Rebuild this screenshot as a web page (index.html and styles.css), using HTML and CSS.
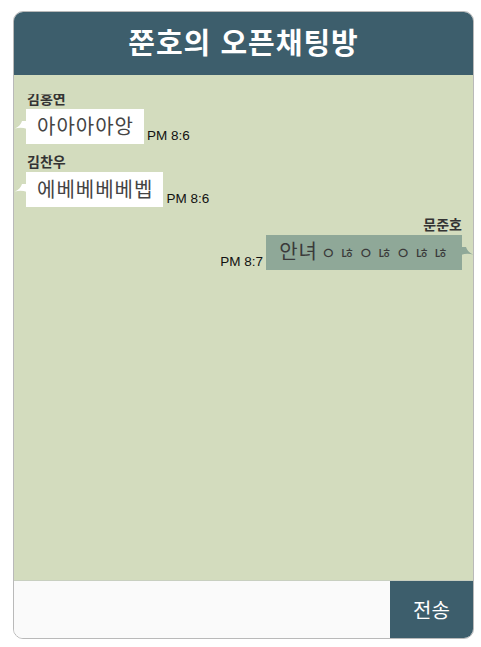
FILE: index.html
```html
<!DOCTYPE html>
<html lang="ko">
<head>
<meta charset="utf-8">
<link rel="stylesheet" href="styles.css">
</head>
<body>
<div class="page">
  <div class="card">
    <header class="header"><h1 class="title">쭌호의 오픈채팅방</h1></header>
    <main class="chat">
      <div class="list">
        <div class="msg first">
          <div class="name">김홍연</div>
          <div class="row">
            <div class="bubble">
              <svg class="tail" width="12" height="10" viewBox="0 0 12 10"><path d="M12 1 L12 9 C8 7.5 4 7.5 0 8.5 C4 6.5 6 4.5 7 1 Z" fill="#fff"/></svg>
              <span class="text">아아아아앙</span>
            </div>
            <span class="time">PM 8:6</span>
          </div>
        </div>
        <div class="msg">
          <div class="name">김찬우</div>
          <div class="row">
            <div class="bubble">
              <svg class="tail" width="12" height="10" viewBox="0 0 12 10"><path d="M12 1 L12 9 C8 7.5 4 7.5 0 8.5 C4 6.5 6 4.5 7 1 Z" fill="#fff"/></svg>
              <span class="text">에베베베베벱</span>
            </div>
            <span class="time">PM 8:6</span>
          </div>
        </div>
        <div class="msg mine">
          <div class="name">문준호</div>
          <div class="row">
            <span class="time">PM 8:7</span>
            <div class="bubble">
              <svg class="tail" width="12" height="10" viewBox="0 0 12 10"><path d="M0 1 L0 9 C4 7.5 8 7.5 12 8.5 C8 6.5 6 4.5 5 1 Z" fill="#8fa898"/></svg>
              <span class="text">안녀<span class="small">ㅇㄶㅇㄶㅇㄶㄶ</span></span>
            </div>
          </div>
        </div>
      </div>
    </main>
    <footer class="footer">
      <div class="input"></div>
      <button class="send">전송</button>
    </footer>
  </div>
</div>
</body>
</html>
```

FILE: styles.css
```css
* { box-sizing: border-box; }
html, body { margin: 0; padding: 0; background: #fff; }
body { font-family: "Liberation Sans", "Noto Sans CJK KR", sans-serif; }
.page { padding: 11px 8px 9px 13px; }
.card {
  width: 461px;
  height: 628px;
  border: 1px solid #b9b9b9;
  border-radius: 10px;
  overflow: hidden;
  display: flex;
  flex-direction: column;
}
.header {
  height: 63px;
  background: #3d5e6c;
  display: flex;
  align-items: center;
  justify-content: center;
  padding-bottom: 5px;
}
.title {
  margin: 0;
  color: #fff;
  font-family: "Noto Sans CJK KR", sans-serif;
  font-size: 29px;
  font-weight: 700;
  letter-spacing: 1px;
  line-height: 36px;
}
.chat {
  flex: 1;
  background: #d3dcbe;
  padding-top: 19px;
  display: flex;
  flex-direction: column;
  min-height: 0;
}
.list { flex: 1; overflow: hidden; padding: 0 11px 0 12px; }
.msg { margin-bottom: 9px; display: flex; flex-direction: column; align-items: flex-start; }
.msg.first { margin-top: -4px; }
.msg.mine { align-items: flex-end; }
.name {
  font-family: "Noto Sans CJK KR", sans-serif;
  font-size: 14px;
  font-weight: 700;
  color: #333;
  line-height: 16px;
  margin-bottom: 3px;
  padding-left: 1px;
}
.row { display: flex; align-items: flex-end; gap: 3px; }
.bubble {
  position: relative;
  display: flex;
  align-items: center;
  background: #fff;
  color: #444;
  font-family: "Noto Sans CJK KR", sans-serif;
  font-size: 20px;
  line-height: 25px;
  padding: 0 10px 2px 11px;
  height: 35px;
  white-space: nowrap;
}
.text { letter-spacing: 1px; }
.bubble .tail { position: absolute; left: -11px; top: 11px; }
.mine .bubble { background: #8fa898; color: #3a3a3a; padding: 0 10px 2px 13px; }
.mine .bubble .tail { left: auto; right: -11px; top: 11px; }
.small { font-size: 16px; letter-spacing: 4px; margin-left: 3px; }
.time {
  font-size: 13.5px;
  color: #111;
  line-height: 14px;
  margin-bottom: 1px;
}
.footer { height: 58px; display: flex; border-top: 1px solid #c8cfc0; }
.input { flex: 1; background: #fafafa; }
.send {
  width: 83px;
  border: none;
  background: #3d5e6c;
  color: #fff;
  font-family: "Noto Sans CJK KR", sans-serif;
  font-size: 20px;
  padding: 0;
}
```
